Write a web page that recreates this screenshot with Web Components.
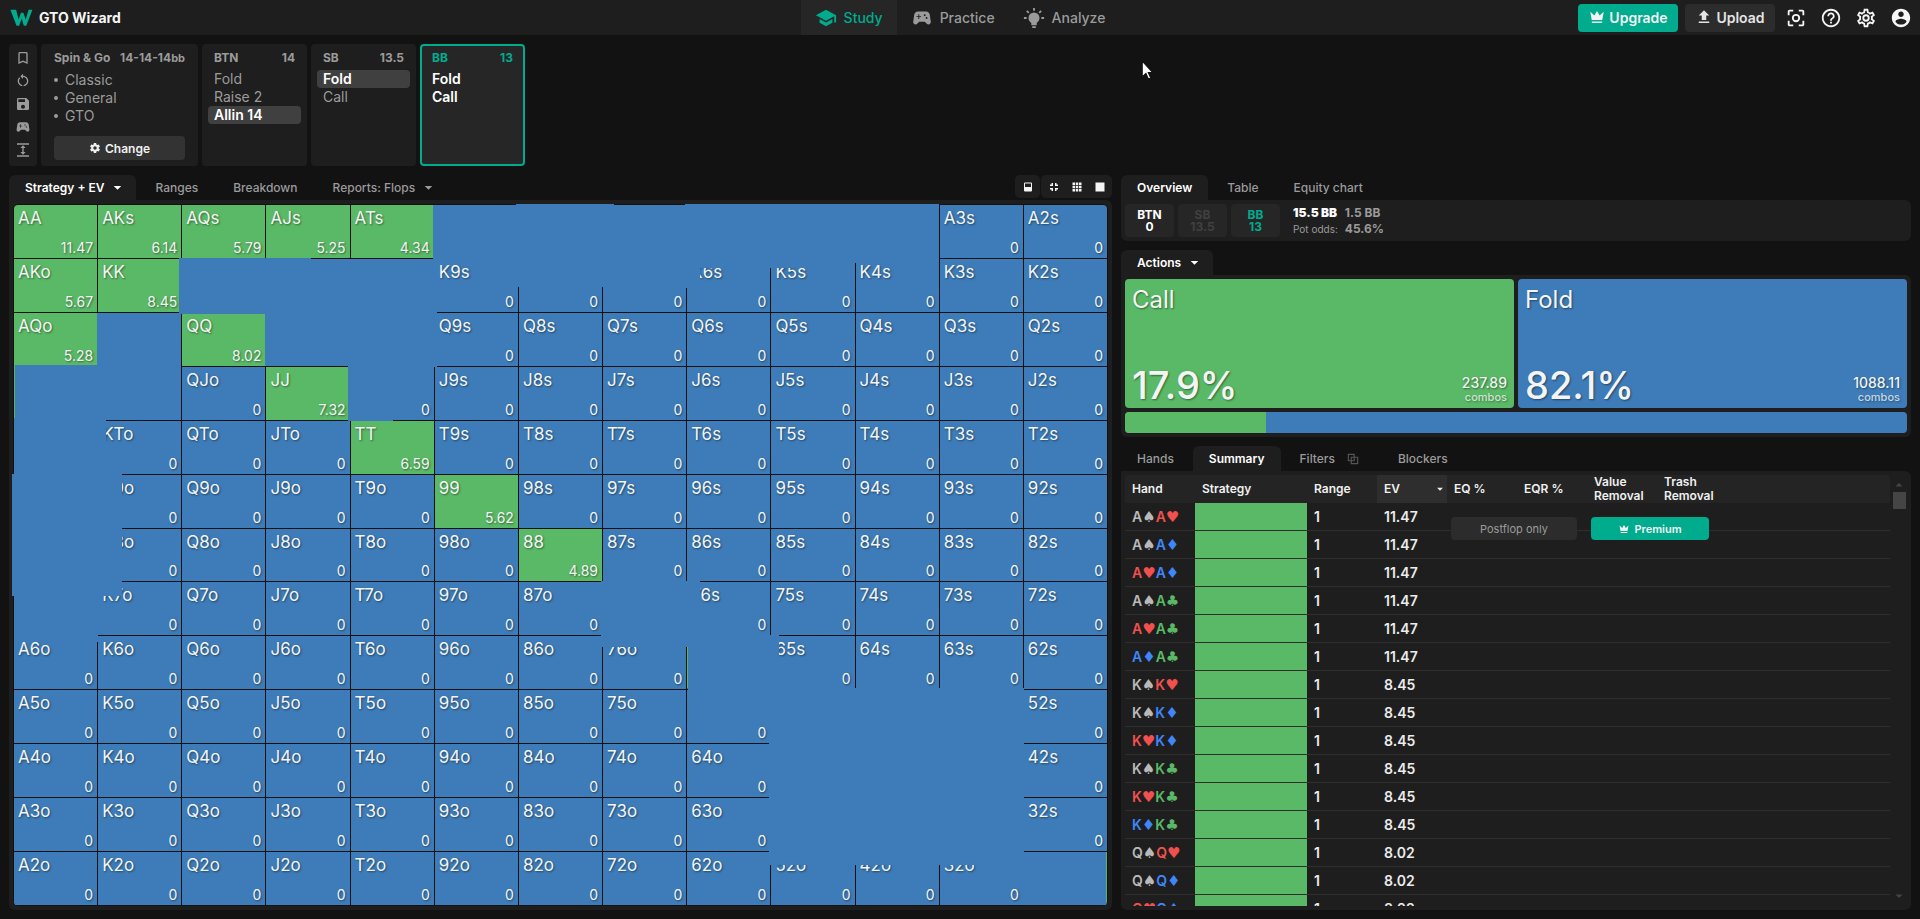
<!DOCTYPE html>
<html lang="en">
<head>
<meta charset="utf-8">
<title>GTO Wizard</title>
<meta name="viewport" content="width=device-width, initial-scale=1">
<style>
  :root {
    --bg: #121212; --panel: #1e1e1e; --raised: #262626; --btn: #333333;
    --accent: #00ab8e; --green: #5ab966; --blue: #3d7cb8;
    --muted: #9b9b9b; --text: #f5f5f5;
  }
  html, body { margin: 0; background: var(--bg); }
  body { font-family: Inter, "Liberation Sans", sans-serif; font-size: 12px; color: var(--text); }
</style>
</head>
<body>
<gto-app></gto-app>
<script>
const ICONS = {
  logo: '<path d="M1 4h6l2.600 10L12 7h2.600L17 14l3-10h4l-6.400 16.500H15L12.800 13l-2.600 7.500H7.400z" transform="translate(-.6)"/>',
  school: '<path d="M12 3L1 9l11 6 9-4.910V17h2V9L12 3zM5 13.180v4L12 21l7-3.820v-4L12 17l-7-3.820z"/>',
  gamepad: '<path d="M21.580 16.090l-1.090-7.660C20.210 6.460 18.520 5 16.530 5H7.470C5.480 5 3.790 6.460 3.510 8.430l-1.090 7.660C2.200 17.630 3.390 19 4.940 19c.68 0 1.320-.27 1.800-.75L9 16h6l2.250 2.250c.48.48 1.130.75 1.800.75 1.560 0 2.750-1.370 2.530-2.910zM11 11H9v2H8v-2H6v-1h2V8h1v2h2v1zm4-1c-.55 0-1-.45-1-1s.45-1 1-1 1 .45 1 1-.45 1-1 1zm2 3c-.55 0-1-.45-1-1s.45-1 1-1 1 .45 1 1-.45 1-1 1z"/>',
  bulb: '<path d="M12 6a6 6 0 0 1 6 6c0 2.220-1.210 4.160-3 5.200V19a1 1 0 0 1-1 1h-4a1 1 0 0 1-1-1v-1.800C7.210 16.160 6 14.220 6 12a6 6 0 0 1 6-6m2 15v1a1 1 0 0 1-1 1h-2a1 1 0 0 1-1-1v-1h4m6-10h3v2h-3v-2M1 11h3v2H1v-2M13 1v3h-2V1h2M4.920 3.500l2.130 2.140-1.420 1.410L3.500 4.930 4.920 3.500m12.030 2.130l2.120-2.130 1.430 1.430-2.130 2.120-1.420-1.420z"/>',
  crown: '<path d="M5 16L3 5l5.500 5L12 4l3.500 6L21 5l-2 11H5m14 3c0 .6-.4 1-1 1H6c-.6 0-1-.4-1-1v-1h14v1z"/>',
  upload: '<path d="M9 16v-6H5l7-7 7 7h-4v6H9m-4 4v-2h14v2H5z"/>',
  focus: '<path d="M5 15H3v4c0 1.100.9 2 2 2h4v-2H5v-4zM5 5h4V3H5c-1.100 0-2 .9-2 2v4h2V5zm14-2h-4v2h4v4h2V5c0-1.100-.9-2-2-2zm0 16h-4v2h4c1.100 0 2-.9 2-2v-4h-2v4zM12 7.500a4.500 4.500 0 1 0 0 9 4.500 4.500 0 0 0 0-9zm0 7a2.500 2.500 0 1 1 0-5 2.500 2.500 0 0 1 0 5z"/>',
  help: '<path d="M11 18h2v-2h-2v2zm1-16C6.480 2 2 6.480 2 12s4.480 10 10 10 10-4.480 10-10S17.520 2 12 2zm0 18c-4.410 0-8-3.590-8-8s3.590-8 8-8 8 3.590 8 8-3.590 8-8 8zm0-14c-2.210 0-4 1.790-4 4h2c0-1.100.9-2 2-2s2 .9 2 2c0 2-3 1.750-3 5h2c0-2.250 3-2.500 3-5 0-2.210-1.790-4-4-4z"/>',
  cogOutline: '<path d="M12 8a4 4 0 0 1 4 4 4 4 0 0 1-4 4 4 4 0 0 1-4-4 4 4 0 0 1 4-4m0 2a2 2 0 0 0-2 2 2 2 0 0 0 2 2 2 2 0 0 0 2-2 2 2 0 0 0-2-2m-2 12c-.25 0-.46-.18-.5-.42l-.37-2.650c-.63-.25-1.170-.59-1.690-.99l-2.490 1.010c-.22.08-.49 0-.61-.22l-2-3.460a.493.493 0 0 1 .12-.64l2.110-1.660L4.500 12l.07-1-2.110-1.630a.493.493 0 0 1-.12-.64l2-3.460c.12-.22.39-.31.61-.22l2.490 1c.52-.39 1.060-.73 1.690-.98l.37-2.650c.04-.24.25-.42.5-.42h4c.25 0 .46.18.5.42l.37 2.650c.63.25 1.170.59 1.690.98l2.490-1c.22-.09.49 0 .61.22l2 3.460c.13.22.07.49-.12.64L19.430 11l.07 1-.07 1 2.110 1.630c.19.15.25.42.12.64l-2 3.460c-.12.22-.39.31-.61.22l-2.490-1c-.52.39-1.060.73-1.690.98l-.37 2.650c-.04.24-.25.42-.5.42h-4m1.250-18l-.37 2.610c-1.200.25-2.260.89-3.030 1.780L5.440 7.350l-.75 1.300L6.800 10.200a5.550 5.550 0 0 0 0 3.600l-2.120 1.560.75 1.300 2.430-1.040c.77.88 1.820 1.520 3.010 1.760l.37 2.620h1.520l.37-2.610c1.190-.25 2.240-.89 3.010-1.770l2.430 1.040.75-1.300-2.120-1.550c.4-1.170.4-2.440 0-3.610l2.110-1.550-.75-1.300-2.410 1.040a5.420 5.420 0 0 0-3.030-1.770L12.750 4h-1.500z"/>',
  cog: '<path d="M12 15.500A3.500 3.500 0 0 1 8.500 12 3.500 3.500 0 0 1 12 8.500a3.500 3.500 0 0 1 3.500 3.500 3.500 3.500 0 0 1-3.500 3.500m7.430-2.530c.04-.32.07-.64.07-.97s-.03-.66-.07-1l2.110-1.630c.19-.15.24-.42.12-.64l-2-3.460c-.12-.22-.39-.31-.61-.22l-2.490 1c-.52-.39-1.060-.73-1.690-.98l-.37-2.650A.506.506 0 0 0 14 2h-4c-.25 0-.46.18-.5.42l-.37 2.650c-.63.25-1.170.59-1.690.98l-2.490-1c-.22-.09-.49 0-.61.22l-2 3.460c-.13.22-.07.49.12.64L4.570 11c-.04.34-.07.67-.07 1s.03.65.07.97l-2.110 1.660c-.19.15-.25.42-.12.64l2 3.460c.12.22.39.3.61.22l2.490-1.010c.52.4 1.060.74 1.690.99l.37 2.650c.04.24.25.42.5.42h4c.25 0 .46-.18.5-.42l.37-2.650c.63-.26 1.170-.59 1.690-.99l2.490 1.010c.22.08.49 0 .61-.22l2-3.460c.12-.22.07-.49-.12-.64l-2.110-1.660z"/>',
  account: '<path d="M12 2C6.480 2 2 6.480 2 12s4.480 10 10 10 10-4.480 10-10S17.520 2 12 2zm0 3c1.660 0 3 1.340 3 3s-1.340 3-3 3-3-1.340-3-3 1.340-3 3-3zm0 14.200c-2.500 0-4.710-1.280-6-3.220.03-1.990 4-3.080 6-3.080 1.990 0 5.970 1.090 6 3.080-1.290 1.940-3.500 3.220-6 3.220z"/>',
  bookmark: '<path d="M17 3H7c-1.100 0-1.990.9-1.990 2L5 21l7-3 7 3V5c0-1.100-.9-2-2-2zm0 15l-5-2.180L7 18V5h10v13z"/>',
  restart: '<path d="M12 4V1L8 5l4 4V6c3.310 0 6 2.690 6 6 0 2.970-2.170 5.430-5 5.910v2.020c3.950-.49 7-3.850 7-7.930 0-4.420-3.580-8-8-8zM6 12c0-1.650.67-3.150 1.760-4.240L6.340 6.340A7.950 7.950 0 0 0 4 12c0 4.080 3.050 7.440 7 7.930v-2.020c-2.830-.48-5-2.940-5-5.910z"/>',
  save: '<path d="M17 3H5c-1.110 0-2 .9-2 2v14c0 1.100.89 2 2 2h14c1.100 0 2-.9 2-2V7l-4-4zm-5 16c-1.660 0-3-1.340-3-3s1.340-3 3-3 3 1.340 3 3-1.340 3-3 3zm3-10H5V5h10v4z"/>',
  expand: '<path d="M3 2h18v2H3zM3 20h18v2H3zM13 9h3l-4-4-4 4h3v6H8l4 4 4-4h-3z"/>',
  copies: '<path d="M3 3h12v5h6v13H8v-5H3V3m2 2v9h3V8h5V5H5m5 5v4h3v-4h-3m5 0v6h-5v3h9v-9h-4z"/>',
  caret: '<path d="M5 9l7 7 7-7z"/>',
  split: '<path d="M6 3h12a2 2 0 0 1 2 2v14a2 2 0 0 1-2 2H6a2 2 0 0 1-2-2V5a2 2 0 0 1 2-2zm0 2v7h12V5z"/>',
  compact: '<path d="M14 14h6v3h-3v3h-3zM4 14h6v6H7v-3H4zM7 4h3v6H4V7h3zM20 7v3h-6V4h3v3z"/>',
  grid3: '<path d="M3 3h5v5H3zM9.500 3h5v5h-5zM16 3h5v5h-5zM3 9.500h5v5H3zM9.500 9.500h5v5h-5zM16 9.500h5v5h-5zM3 16h5v5H3zM9.500 16h5v5h-5zM16 16h5v5h-5z"/>',
  square: '<path d="M3 3h18v18H3z"/>'
};

const RESET = `
  *, *::before, *::after { box-sizing: border-box; }
  button { font: inherit; color: inherit; background: none; border: 0; padding: 0; margin: 0; cursor: pointer; }
  a { color: inherit; text-decoration: none; }
`;

function define(name, css, render) {
  customElements.define(name, class extends HTMLElement {
    constructor() {
      super();
      this.attachShadow({ mode: 'open' });
    }
    connectedCallback() {
      const tpl = document.createElement('template');
      tpl.innerHTML = `<style>${RESET}${css}</style>${render(this)}`;
      this.shadowRoot.replaceChildren(tpl.content.cloneNode(true));
    }
  });
}

define('gto-icon',
  `:host { display: inline-flex; flex: none; width: 16px; height: 16px; }
   svg { width: 100%; height: 100%; fill: currentColor; display: block; }`,
  el => `<svg viewBox="0 0 24 24" aria-hidden="true">${ICONS[el.getAttribute('name')]}</svg>`);

define('gto-header',
  `:host { display: block; background: var(--panel); }
   header { display: grid; grid-template-columns: 1fr auto 1fr; align-items: center; height: 35px; }
   .brand { display: flex; align-items: center; gap: 6px; padding-left: 10px; font-size: 14px; font-weight: 700; }
   .brand gto-icon { width: 23px; height: 23px; color: var(--accent); }
   nav { display: flex; height: 35px; }
   nav a { display: flex; align-items: center; gap: 7px; padding: 0 14px; font-size: 14px; font-weight: 500; color: var(--muted); }
   nav a[aria-current] { color: var(--accent); background: var(--raised); }
   nav gto-icon { width: 22px; height: 22px; }
   .tools { display: flex; align-items: center; justify-content: flex-end; padding-right: 8px; }
   .tools button { display: flex; align-items: center; justify-content: center; }
   .wide { height: 28px; gap: 3px; border-radius: 4px; font-size: 14px; font-weight: 600; background: #2c2c2c; color: #e4e4e4; }
   .upload { width: 90px; margin: 0 10px 0 7px; }
   .upgrade { width: 100px; background: var(--accent); color: #f2f2f2; }
   .wide gto-icon { width: 18px; height: 18px; margin-bottom: 2px; }
   .tools .icon { width: 22px; height: 22px; margin-right: 13px; }
   .tools .icon:last-child { margin-right: 0; }
   .icon gto-icon { width: 22px; height: 22px; }`,
  () => `<header>
    <a class="brand" href="#home"><gto-icon name="logo"></gto-icon>GTO Wizard</a>
    <nav>
      <a href="#study" aria-current="page"><gto-icon name="school"></gto-icon>Study</a>
      <a href="#practice"><gto-icon name="gamepad"></gto-icon>Practice</a>
      <a href="#analyze"><gto-icon name="bulb"></gto-icon>Analyze</a>
    </nav>
    <div class="tools">
      <button class="wide upgrade"><gto-icon name="crown"></gto-icon>Upgrade</button>
      <button class="wide upload"><gto-icon name="upload"></gto-icon>Upload</button>
      <button class="icon" aria-label="Focus"><gto-icon name="focus"></gto-icon></button>
      <button class="icon" aria-label="Help"><gto-icon name="help"></gto-icon></button>
      <button class="icon" aria-label="Settings"><gto-icon name="cogOutline"></gto-icon></button>
      <button class="icon" aria-label="Account"><gto-icon name="account"></gto-icon></button>
    </div>
  </header>`);

define('gto-position',
  `:host { display: block; width: 105px; padding: 6px; border-radius: 4px; background: var(--panel); color: var(--muted); }
   :host([active]) { padding: 4px; background: var(--raised); border: 2px solid var(--accent); color: #fff; }
   h2 { display: flex; justify-content: space-between; margin: 0 0 4px; padding: 0 6px; font-size: 12px; line-height: 16px; font-weight: 700; }
   :host([active]) h2 { color: var(--accent); }
   button { display: block; width: 100%; padding: 0 6px; border-radius: 4px; text-align: left; font-size: 14px; line-height: 18px; }
   :host([active]) button { font-weight: 600; }
   button[aria-pressed=true] { background: #404040; color: #fff; font-weight: 600; }`,
  el => `<h2><span>${el.getAttribute('name')}</span><span>${el.getAttribute('stack')}</span></h2>` +
    el.getAttribute('actions').split(',').map(a =>
      `<button aria-pressed="${a === el.getAttribute('chosen')}">${a}</button>`).join(''));

define('gto-spots',
  `:host { display: flex; gap: 4px; height: 122px; }
   .rail { display: flex; flex-direction: column; align-items: center; justify-content: space-between; width: 28px; padding: 6px 0 8px; border-radius: 4px; background: var(--panel); color: var(--muted); }
   .rail button { height: 16px; }
   .format { width: 157px; padding: 6px 13px; border-radius: 4px; background: var(--panel); color: var(--muted); }
   h2 { display: flex; justify-content: space-between; margin: 0 0 5px; font-size: 12px; line-height: 16px; font-weight: 700; white-space: nowrap; }
   small { font-size: 11px; }
   ul { margin: 0; padding: 0; font-size: 14px; line-height: 18px; list-style: none; }
   li { display: flex; align-items: center; gap: 7px; }
   li::before { content: ""; width: 4px; height: 4px; border-radius: 2px; background: currentColor; }
   .change { display: flex; align-items: center; justify-content: center; gap: 4px; width: 100%; height: 24px; margin-top: 11px; border-radius: 4px; background: var(--btn); color: #f0f0f0; font-weight: 600; }
   .change gto-icon { width: 12px; height: 12px; }`,
  () => `<div class="rail">
      ${['bookmark', 'restart', 'save', 'gamepad', 'expand'].map(n => `<button aria-label="${n}"><gto-icon name="${n}"></gto-icon></button>`).join('')}
    </div>
    <section class="format">
      <h2><span>Spin &amp; Go</span><span>14-14-14<small>bb</small></span></h2>
      <ul><li>Classic</li><li>General</li><li>GTO</li></ul>
      <button class="change"><gto-icon name="cog"></gto-icon>Change</button>
    </section>
    <gto-position name="BTN" stack="14" actions="Fold,Raise 2,Allin 14" chosen="Allin 14"></gto-position>
    <gto-position name="SB" stack="13.5" actions="Fold,Call" chosen="Fold"></gto-position>
    <gto-position name="BB" stack="13" actions="Fold,Call" active></gto-position>`);

/* Tab header over a panel. Entries are separated by "|"; "*" marks the open tab, "^" a drop-down, "~" the filter copy icon. */
define('gto-panel',
  `:host { display: flex; flex-direction: column; min-width: 0; }
   .bar { display: flex; justify-content: space-between; height: 25px; }
   .tabs { display: flex; }
   .tabs button { display: flex; align-items: center; gap: 7px; padding: 0 16px; font-size: 12px; font-weight: 500; color: var(--muted); white-space: nowrap; }
   .tabs button + button { margin-left: 3px; }
   .tabs button[aria-selected=true] { background: var(--panel); border-radius: 6px 6px 0 0; color: #fff; font-weight: 600; }
   .caret { width: 13px; height: 13px; margin-right: -4px; }
   .copy { width: 14px; height: 14px; margin: 0 3px 0 4px; color: #555; }
   .body { flex: 1; min-height: 0; padding: 4px; border-radius: 0 6px 6px 6px; background: var(--panel); }`,
  el => `<div class="bar"><div class="tabs" role="tablist">${el.getAttribute('tabs').split('|').map(t => {
      const label = t.replace(/[*^~]/g, '');
      return `<button role="tab" aria-selected="${t.includes('*')}">${label}${t.includes('^') ? '<gto-icon class="caret" name="caret"></gto-icon>' : ''}${t.includes('~') ? '<gto-icon class="copy" name="copies"></gto-icon>' : ''}</button>`;
    }).join('')}</div><slot name="tools"></slot></div><div class="body"><slot></slot></div>`);

define('gto-view-tools',
  `:host { display: flex; gap: 1px; height: 23px; }
   div { display: flex; align-items: center; border-radius: 5px; background: var(--panel); padding: 0 1px; }
   button { display: flex; align-items: center; justify-content: center; width: 23px; height: 23px; }
   gto-icon { width: 12px; height: 12px; }`,
  () => `<div><button aria-label="Split view"><gto-icon name="split"></gto-icon></button></div>
    <div><button aria-label="Compact"><gto-icon name="compact"></gto-icon></button><button aria-label="Grid"><gto-icon name="grid3"></gto-icon></button><button aria-label="Single"><gto-icon name="square"></gto-icon></button></div>`);

const RANKS = 'AKQJT98765432';
const CALLS = { AA: '11.47', AKs: '6.14', AQs: '5.79', AJs: '5.25', ATs: '4.34', AKo: '5.67', KK: '8.45', AQo: '5.28', QQ: '8.02', JJ: '7.32', TT: '6.59', 99: '5.62', 88: '4.89' };
const BLANK = 'A9s A8s A7s A6s A5s A4s KQs KJs KTs KQo QJs QTs AJo KJo ATo A9o A8o A7o 77 66 55 54s 53s 54o 44 43s 53o 43o 33 22'.split(' ');
const VALUE_ONLY = 'K8s K7s JTs 65o'.split(' ');

define('gto-matrix',
  `:host { display: block; position: relative; height: 100%; }
   .grid { display: grid; grid-template: repeat(13, minmax(0, 1fr)) / repeat(13, minmax(0, 1fr)); gap: 1px; height: 100%; padding: 1px; border-radius: 6px; background: var(--bg); overflow: hidden; }
   .cell { display: flex; flex-direction: column; justify-content: space-between; padding: 2px 4px 2px 4px; background: var(--blue); text-shadow: 1px 1px 2px rgba(0, 0, 0, .45); color: #f4f4f4; }
   .call { background: var(--green); }
   .name { font-size: 17px; line-height: 22px; }
   .ev { margin-top: auto; font-size: 14px; line-height: 17px; text-align: right; }
   .cell:first-child { border-top-left-radius: 4px; }
   .cell:nth-child(13) { border-top-right-radius: 4px; }
   svg { position: absolute; inset: 0; width: 100%; height: 100%; overflow: visible; fill: var(--blue); pointer-events: none; }
   .edge { fill: var(--green); }`,
  () => {
    let cells = '';
    for (let r = 0; r < 13; r++) for (let c = 0; c < 13; c++) {
      const hand = r === c ? RANKS[r] + RANKS[r] : r < c ? RANKS[r] + RANKS[c] + 's' : RANKS[c] + RANKS[r] + 'o';
      const blank = BLANK.includes(hand);
      const name = blank || VALUE_ONLY.includes(hand) ? '' : `<span class="name">${hand}</span>`;
      const ev = blank ? '' : `<span class="ev">${CALLS[hand] || 0}</span>`;
      cells += `<div class="cell${CALLS[hand] ? ' call' : ''}">${name}${ev}</div>`;
    }
    /* merged areas of the map, in a 1095 x 702 space that spans the frame */
    return `<div class="grid">${cells}</div>
    <svg viewBox="0 0 1095 702" preserveAspectRatio="none" shape-rendering="crispEdges">
      <path d="M420 1H503V0H601V1H672V0H926V59H842V64H687V84H673V83H500V57H420z"/>
      <path d="M166 54H298V55H424V163H404V196H380V217H335V162H252V110H166z"/>
      <path d="M84 109H168V215H101V214H93V270H109V392H85V438H1V392H-1V270H1V214H2V161H84z"/>
      <path d="M588 377H687V431H766V484H1011V661H756V500H675V443H588z"/>
      <path d="M1009 648H1093V701H1009z"/>
      <path class="edge" d="M1 162H2V214H1zM674 443H675V484H674zM1093 648H1094V698H1093z"/>
    </svg>`;
  });

define('gto-pot',
  `:host { display: flex; align-items: center; }
   .seat { display: flex; flex-direction: column; justify-content: center; width: 49px; height: 33px; margin-right: 4px; border-radius: 4px; background: var(--raised); text-align: center; font-size: 12px; line-height: 12px; font-weight: 700; color: #fff; }
   .out { color: #404040; }
   .me { color: var(--accent); }
   .odds { display: grid; grid-template-columns: auto auto; column-gap: 7px; margin-left: 9px; line-height: 16px; color: var(--muted); font-weight: 700; }
   .odds b { color: #fff; }
   .odds span { font-size: 10px; font-weight: 400; }`,
  () => `<div class="seat">BTN<span>0</span></div><div class="seat out">SB<span>13.5</span></div><div class="seat me">BB<span>13</span></div>
    <div class="odds"><b>15.5 BB</b><div>1.5 BB</div><span>Pot odds:</span><div>45.6%</div></div>`);

define('gto-action-card',
  `:host { display: flex; flex-direction: column; justify-content: space-between; flex: 1; height: 129px; padding: 6px 7px 4px 7px; border-radius: 4px; background: var(--tone); color: #f4f4f4; text-shadow: 1px 1px 2px rgba(0, 0, 0, .45); }
   .name { font-size: 24px; line-height: 30px; }
   .foot { display: flex; justify-content: space-between; align-items: flex-end; }
   .pct { font-size: 38px; line-height: 38px; font-weight: 500; }
   .combos { text-align: right; font-size: 14px; line-height: 16px; font-weight: 500; }
   small { display: block; font-size: 11px; line-height: 13px; opacity: .75; }`,
  el => `<div class="name">${el.getAttribute('name')}</div>
    <div class="foot"><div class="pct">${el.getAttribute('pct')}</div><div class="combos">${el.getAttribute('combos')}<small>combos</small></div></div>`);

define('gto-actions',
  `:host { display: block; }
   .cards { display: flex; gap: 4px; }
   .call { --tone: var(--green); }
   .fold { --tone: var(--blue); }
   .split { display: flex; height: 21px; margin-top: 4px; border-radius: 4px; overflow: hidden; background: var(--blue); }
   .split div { width: 18%; background: var(--green); }`,
  () => `<div class="cards"><gto-action-card class="call" name="Call" pct="17.9%" combos="237.89"></gto-action-card><gto-action-card class="fold" name="Fold" pct="82.1%" combos="1088.11"></gto-action-card></div>
    <div class="split"><div></div></div>`);

const SUITS = { s: ['♠', '#b9b9b9'], h: ['♥', '#f0514e'], d: ['♦', '#3f86fa'], c: ['♣', '#5ab966'] };
const HANDS = 'AsAh AsAd AhAd AsAc AhAc AdAc KsKh KsKd KhKd KsKc KhKc KdKc QsQh QsQd QhQd'.split(' ');
const EVS = { A: '11.47', K: '8.45', Q: '8.02' };

define('gto-hands',
  `:host { display: flex; height: 100%; position: relative; overflow: hidden; }
   .view { flex: 1; min-width: 0; overflow: hidden; }
   table { width: 100%; table-layout: fixed; border-collapse: separate; border-spacing: 0; }
   th { height: 28px; padding: 0 0 0 7px; background: #242424; text-align: left; font-size: 12px; line-height: 14px; font-weight: 600; color: #f0f0f0; }
   th:first-child { border-radius: 4px 0 0 0; }
   th:last-child { border-radius: 0 4px 0 0; }
   th.sorted { background: #2e2e2e; padding-right: 2px; }
   th button { display: flex; align-items: center; justify-content: space-between; width: 100%; }
   th gto-icon { width: 10px; height: 10px; }
   td { height: 28px; padding: 0 0 0 7px; border-bottom: 1px solid #2f2f2f; font-size: 14px; line-height: 20px; font-weight: 600; white-space: nowrap; color: #ececec; }
   td.mix { background: var(--green); background-clip: padding-box; }
   i { font-family: "DejaVu Sans", sans-serif; font-size: 15px; line-height: 1px; font-style: normal; font-weight: 400; }
   .bar { display: flex; flex-direction: column; align-items: center; width: 17px; padding: 4px 0; color: #454545; }
   .bar gto-icon { width: 12px; height: 12px; }
   .up { transform: rotate(180deg); }
   .thumb { width: 13px; height: 17px; margin: 1px 0 auto 2px; background: #454545; }
   .locks { position: absolute; top: 42px; left: 326px; display: flex; gap: 14px; }
   .locks button { display: flex; align-items: center; justify-content: center; gap: 4px; height: 23px; border-radius: 4px; }
   .post { width: 126px; background: #2c2c2c; color: var(--muted); font-size: 11px; }
   .prem { width: 118px; background: var(--accent); color: #f2f2f2; font-size: 11px; font-weight: 600; }
   .prem gto-icon { width: 12px; height: 12px; }`,
  () => `<div class="view"><table>
      <colgroup><col style="width:70px"><col style="width:112px"><col style="width:70px"><col style="width:70px"><col style="width:70px"><col style="width:70px"><col style="width:70px"><col></colgroup>
      <thead><tr><th>Hand</th><th>Strategy</th><th>Range</th><th class="sorted"><button>EV<gto-icon name="caret"></gto-icon></button></th><th>EQ %</th><th>EQR %</th><th>Value<br>Removal</th><th>Trash<br>Removal</th></tr></thead>
      <tbody>${HANDS.map(h => `<tr><td>${[h.slice(0, 2), h.slice(2)].map(c =>
        `<span style="color:${SUITS[c[1]][1]}">${c[0]}<i>${SUITS[c[1]][0]}</i></span>`).join('')}</td><td class="mix"></td><td>1</td><td>${EVS[h[0]]}</td><td></td><td></td><td></td><td></td></tr>`).join('')}</tbody>
    </table></div>
    <div class="bar"><gto-icon class="up" name="caret"></gto-icon><div class="thumb"></div><gto-icon name="caret"></gto-icon></div>
    <div class="locks"><button class="post" disabled>Postflop only</button><button class="prem"><gto-icon name="crown"></gto-icon>Premium</button></div>`);

define('gto-app',
  `:host { display: flex; flex-direction: column; height: 100vh; min-height: 640px; }
   gto-spots { margin: 9px 9px 0; flex: none; }
   main { flex: 1; min-height: 0; display: grid; grid-template-columns: 1103fr 790fr; gap: 9px; padding: 9px; }
   .side { display: flex; flex-direction: column; gap: 9px; min-width: 0; min-height: 0; }
   .hands { flex: 1; min-height: 0; }
   .pointer { position: absolute; left: 1141px; top: 60px; width: 13px; height: 20px; }`,
  () => `<gto-header></gto-header>
    <gto-spots></gto-spots>
    <main>
      <gto-panel tabs="*Strategy + EV^|Ranges|Breakdown|Reports: Flops^"><gto-view-tools slot="tools"></gto-view-tools><gto-matrix></gto-matrix></gto-panel>
      <div class="side">
        <gto-panel tabs="*Overview|Table|Equity chart"><gto-pot></gto-pot></gto-panel>
        <gto-panel tabs="*Actions^"><gto-actions></gto-actions></gto-panel>
        <gto-panel class="hands" tabs="Hands|*Summary|Filters~|Blockers"><gto-hands></gto-hands></gto-panel>
      </div>
    </main>
    <svg class="pointer" viewBox="0 0 12 19" aria-hidden="true"><path d="M1 1v15l3.500-3.300L6.800 18l2.200-1-2.300-5H11z" fill="#fff" stroke="#111"/></svg>`);
</script>
</body>
</html>
